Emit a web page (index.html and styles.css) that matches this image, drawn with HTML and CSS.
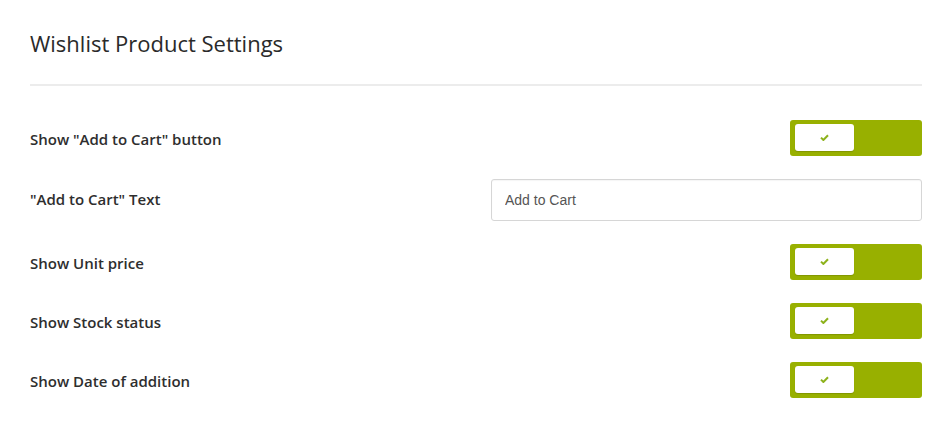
FILE: index.html
```html
<!DOCTYPE html>
<html lang="en">
<head>
    <meta charset="UTF-8">
    <title>Wishlist Product Settings</title>
    <link rel="stylesheet" href="styles.css">
</head>
<body>
    <div class="panel">
        <h2 class="panel-title">Wishlist Product Settings</h2>

        <div class="settings">
            <div class="row">
                <label class="label">Show "Add to Cart" button</label>
                <span class="toggle"><span class="knob"><svg width="9" height="7" viewBox="0 0 9 7"><path d="M1 3.6 L3.4 6 L8 1.2" fill="none" stroke="#8db21c" stroke-width="2"/></svg></span></span>
            </div>
            <div class="row">
                <label class="label label-input">"Add to Cart" Text</label>
                <input class="text-input" type="text" value="Add to Cart">
            </div>
            <div class="row">
                <label class="label">Show Unit price</label>
                <span class="toggle"><span class="knob"><svg width="9" height="7" viewBox="0 0 9 7"><path d="M1 3.6 L3.4 6 L8 1.2" fill="none" stroke="#8db21c" stroke-width="2"/></svg></span></span>
            </div>
            <div class="row">
                <label class="label">Show Stock status</label>
                <span class="toggle"><span class="knob"><svg width="9" height="7" viewBox="0 0 9 7"><path d="M1 3.6 L3.4 6 L8 1.2" fill="none" stroke="#8db21c" stroke-width="2"/></svg></span></span>
            </div>
            <div class="row">
                <label class="label">Show Date of addition</label>
                <span class="toggle"><span class="knob"><svg width="9" height="7" viewBox="0 0 9 7"><path d="M1 3.6 L3.4 6 L8 1.2" fill="none" stroke="#8db21c" stroke-width="2"/></svg></span></span>
            </div>
        </div>
    </div>
</body>
</html>
```

FILE: styles.css
```css
body {
    margin: 0;
    background: #fff;
    font-family: "Open Sans", Arial, sans-serif;
    color: #2b2b2b;
}
.panel {
    padding: 0 30px;
}
.panel-title {
    margin: 0;
    padding: 28px 0 26px;
    font-size: 22px;
    font-weight: 400;
    line-height: 30px;
    color: #2a2a2a;
    border-bottom: 2px solid #ececec;
}
.settings {
    display: flex;
    flex-direction: column;
    gap: 23px;
    padding-top: 34px;
}
.row {
    display: flex;
    align-items: center;
    justify-content: space-between;
    min-height: 36px;
}
.label {
    font-size: 15px;
    font-weight: 600;
    color: #2e2e2e;
    margin-top: 1px;
}
.label-input {
    margin-top: -3px;
}
.toggle {
    display: flex;
    align-items: flex-start;
    width: 132px;
    height: 36px;
    box-sizing: border-box;
    padding: 4px 5px;
    background: #98b000;
    border-radius: 3px;
}
.knob {
    display: flex;
    align-items: center;
    justify-content: center;
    width: 59px;
    height: 27px;
    background: #fff;
    border-radius: 3px;
    box-shadow: 0 1px 1px rgba(0,0,0,0.15);
}
.text-input {
    width: 431px;
    height: 42px;
    box-sizing: border-box;
    padding: 0 13px;
    border: 1px solid #d6d6d6;
    border-radius: 3px;
    font-family: Arial, "Liberation Sans", sans-serif;
    font-size: 14px;
    color: #555;
    box-shadow: inset 0 1px 1px rgba(0,0,0,0.04);
}
```
